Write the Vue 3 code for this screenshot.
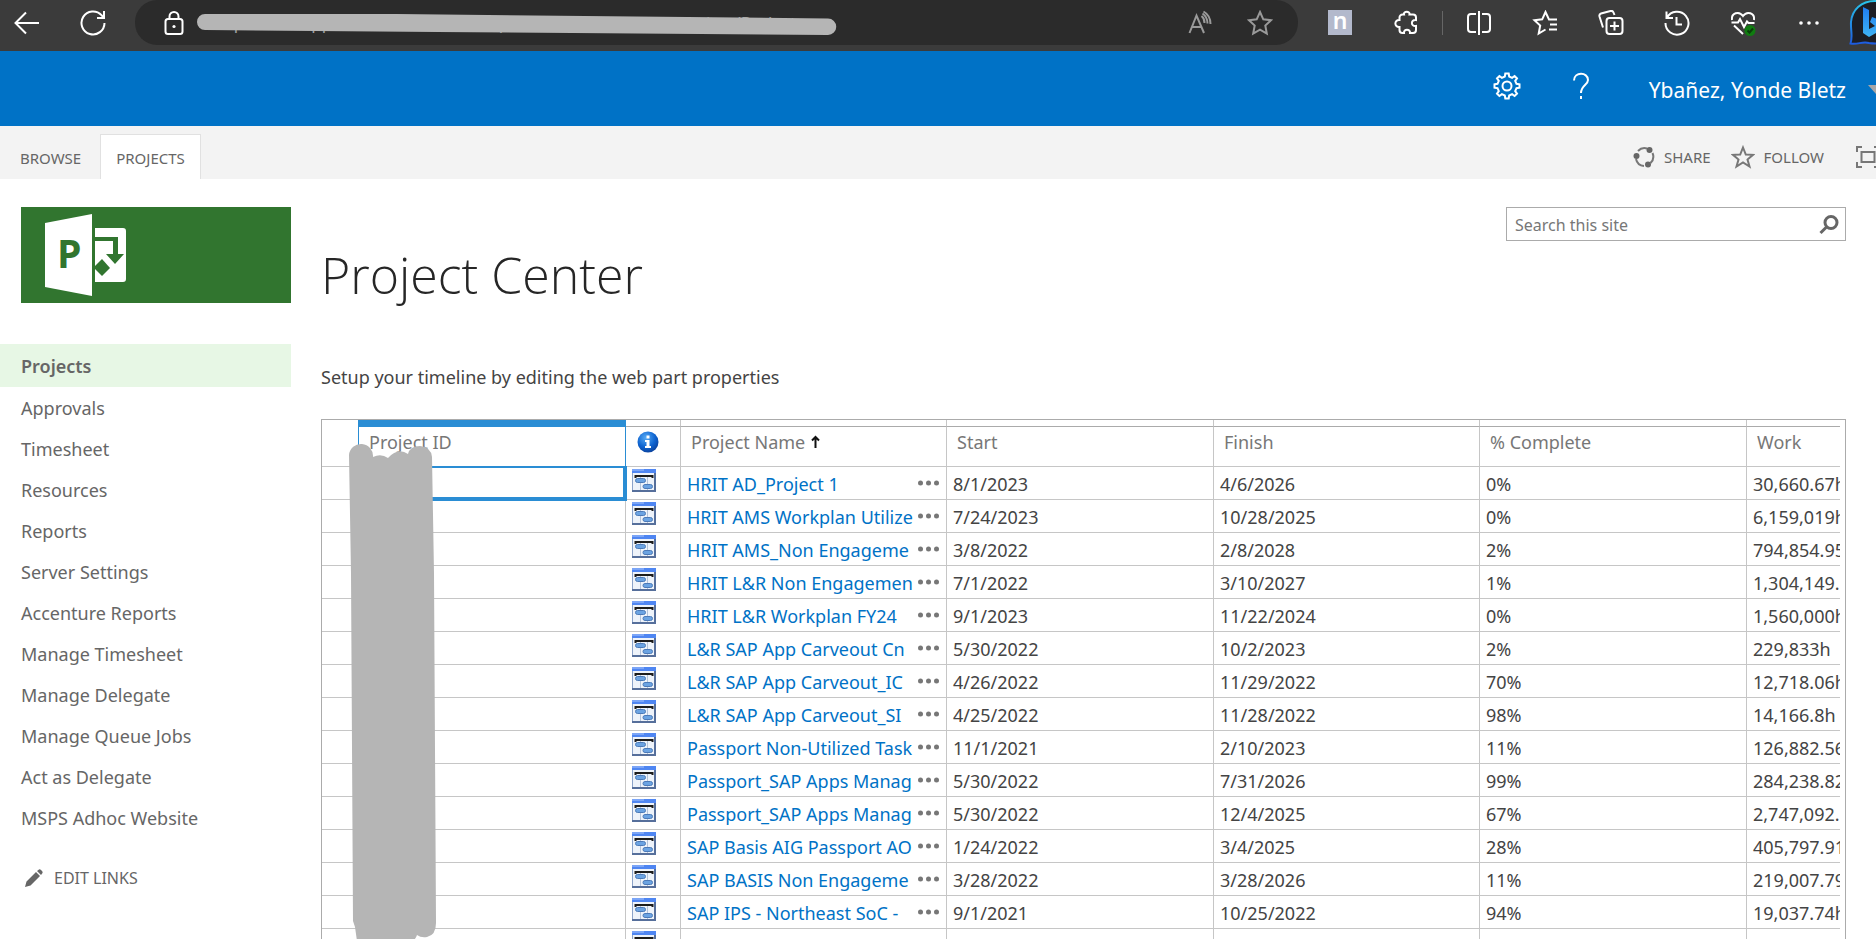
<script setup>
import { ref } from 'vue'

const address = ref('https://dev.apps.intranet.local/sites/portfolio/pages/views/Project/Project')
const query = ref('')

const navItems = [
  'Projects', 'Approvals', 'Timesheet', 'Resources', 'Reports', 'Server Settings',
  'Accenture Reports', 'Manage Timesheet', 'Manage Delegate', 'Manage Queue Jobs',
  'Act as Delegate', 'MSPS Adhoc Website',
]

const rows = [
  ['HRIT AD_Project 1', '8/1/2023', '4/6/2026', '0%', '30,660.67h'],
  ['HRIT AMS Workplan Utilize', '7/24/2023', '10/28/2025', '0%', '6,159,019h'],
  ['HRIT AMS_Non Engageme', '3/8/2022', '2/8/2028', '2%', '794,854.95'],
  ['HRIT L&R Non Engagemen', '7/1/2022', '3/10/2027', '1%', '1,304,149.'],
  ['HRIT L&R Workplan FY24', '9/1/2023', '11/22/2024', '0%', '1,560,000h'],
  ['L&R SAP App Carveout Cn', '5/30/2022', '10/2/2023', '2%', '229,833h'],
  ['L&R SAP App Carveout_IC', '4/26/2022', '11/29/2022', '70%', '12,718.06h'],
  ['L&R SAP App Carveout_SI', '4/25/2022', '11/28/2022', '98%', '14,166.8h'],
  ['Passport Non-Utilized Task', '11/1/2021', '2/10/2023', '11%', '126,882.56'],
  ['Passport_SAP Apps Manag', '5/30/2022', '7/31/2026', '99%', '284,238.82'],
  ['Passport_SAP Apps Manag', '5/30/2022', '12/4/2025', '67%', '2,747,092.'],
  ['SAP Basis AIG Passport AO', '1/24/2022', '3/4/2025', '28%', '405,797.91'],
  ['SAP BASIS Non Engageme', '3/28/2022', '3/28/2026', '11%', '219,007.79'],
  ['SAP IPS - Northeast SoC -', '9/1/2021', '10/25/2022', '94%', '19,037.74h'],
  ['SAP IPS Workplan', '9/1/2021', '10/25/2022', '0%', '19,037.74h'],
]
</script>

<template>
  <div class="page">
    <header class="browser">
      <button class="tool back" aria-label="Back">
        <svg width="26" height="26" viewBox="0 0 26 26"><path d="M25 13H2M12 2.500L1.500 13L12 23.500" /></svg>
      </button>
      <button class="tool reload" aria-label="Refresh">
        <svg width="26" height="26" viewBox="0 0 26 26"><path d="M24.500 13A11.500 11.500 0 1 1 21.500 5.200L23.500 7.500M24 1V8H17" /></svg>
      </button>
      <div class="omnibox">
        <svg class="lock" width="24" height="26" viewBox="0 0 24 26"><rect x="3.500" y="9" width="17" height="15" rx="2.500" /><path d="M7.500 9V6.500a4.500 4.500 0 0 1 9 0V9" /><circle class="solid" cx="12" cy="16.500" r="1.600" /></svg>
        <div class="address">
          <input v-model="address" type="text" aria-label="Address" spellcheck="false" />
          <svg class="strike" width="640" height="24" viewBox="0 0 640 24"><path d="M8 1H200L631 5.500a8 8 0 0 1 0 16.500L240 19L8 17a8 8 0 0 1 0-16Z" /></svg>
        </div>
        <button class="inner" aria-label="Read aloud">
          <svg width="26" height="26" viewBox="0 0 26 26"><path d="M2.500 23L9.500 5.500L17 23M5 17H14.500M14.500 6c2 1.500 3 4 3 7M16.500 1.500c4.500 2.500 7 6.500 7 12.500M15.500 3.500c3.500 2.500 5 5.500 5 10" /></svg>
        </button>
        <button class="inner" aria-label="Add to favorites">
          <svg width="26" height="26" viewBox="0 0 26 26"><path d="M13 2L16.300 9.300L24 10.200L18.300 15.500L19.800 23.500L13 19.600L6.200 23.500L7.700 15.500L2 10.200L9.700 9.300Z" /></svg>
        </button>
      </div>
      <div class="tools">
        <button class="tool" aria-label="Notes extension"><span class="letter">n</span></button>
        <button class="tool" aria-label="Extensions">
          <svg width="26" height="26" viewBox="0 0 26 26"><path d="M11 4.500C10 .8 17.500 .8 16.500 4.500H20a3 3 0 0 1 3 3V10C17.500 9 17.500 17 23 16V20a3 3 0 0 1-3 3H17C17.500 18.500 10.500 18.500 11 23H9.500a3 3 0 0 1-3-3V17C1 17.500 1 9.500 6.500 10V7.500a3 3 0 0 1 3-3Z" /></svg>
        </button>
        <span class="divider"></span>
        <button class="tool" aria-label="Split screen">
          <svg width="26" height="26" viewBox="0 0 26 26"><path d="M13 1V25M10 4H5a3 3 0 0 0-3 3V19a3 3 0 0 0 3 3H10M16 4H21a3 3 0 0 1 3 3V19a3 3 0 0 1-3 3H16" /></svg>
        </button>
        <button class="tool" aria-label="Favorites">
          <svg width="26" height="26" viewBox="0 0 26 26"><path d="M25 9.500H17L13.500 2L10.200 9.300L2.500 10.200L8.200 15.500L6.700 23.500L13.500 19.500M18 14.500H25M17 19.500H25" /></svg>
        </button>
        <button class="tool" aria-label="Collections">
          <svg width="26" height="26" viewBox="0 0 26 26"><path d="M5 17.500L1.500 6.500a2.500 2.500 0 0 1 1.500-3L12.500 1a2.500 2.500 0 0 1 3 1.500L16.500 5" /><rect x="8.500" y="8" width="16" height="16" rx="3" /><path d="M16.500 11.500V20.500M12 16H21" /></svg>
        </button>
        <button class="tool" aria-label="History">
          <svg width="26" height="26" viewBox="0 0 26 26"><path d="M2.500 1.500V8H9M3 7.500A11.500 11.500 0 1 1 1.500 13M12.500 7V14.500H18" /></svg>
        </button>
        <button class="tool" aria-label="Browser essentials">
          <svg width="26" height="26" viewBox="0 0 26 26"><path d="M2 10C1 3 9 .5 13 6C17 .5 25 3 24 10M1.500 12.500H8L10 9L14 17L17 11.500L18.500 13H24.500M4 15.500L13 24" /><circle class="good" cx="20" cy="20.500" r="5.500" /><path class="tick" d="M17.500 20.500L19.500 22.500L23 18.500" /></svg>
        </button>
        <button class="tool" aria-label="Settings and more">
          <svg width="26" height="26" viewBox="0 0 26 26"><g class="solid"><circle cx="5" cy="13" r="1.800" /><circle cx="13" cy="13" r="1.800" /><circle cx="21" cy="13" r="1.800" /></g></svg>
        </button>
        <button class="bing" aria-label="Bing">
          <svg width="52" height="48" viewBox="0 0 52 48">
            <defs>
              <linearGradient id="rim" x1="0" y1="0" x2="0" y2="1"><stop offset="0" stop-color="#29c3e8" /><stop offset="1" stop-color="#1d5be0" /></linearGradient>
              <linearGradient id="bee" x1="0" y1="0" x2="0" y2="1"><stop offset="0" stop-color="#1f7cf0" /><stop offset="1" stop-color="#3fb4f5" /></linearGradient>
            </defs>
            <path d="M26 1C12 1 3 10 2 22C1.500 31 4 36 1.500 43.500C9 45 13 41 20 43C40 46 50 34 50 22C50 10 40 1 26 1Z" fill="#1c1d24" stroke="url(#rim)" stroke-width="2" />
            <path class="bee" d="M14 7L20 10V29L26 26L21 22L23 17L36 22V28L20 37L14 33Z" fill="url(#bee)" />
          </svg>
        </button>
      </div>
    </header>

    <div class="suite">
      <button class="gear" aria-label="Settings">
        <svg width="28" height="28" viewBox="0 0 28 28"><path d="M11.800 4.500L12.300 1.500H15.700L16.200 4.500L19.100 5.800L21.600 4L24 6.400L22.200 8.900L23.500 11.800L26.500 12.300V15.700L23.500 16.200L22.200 19.100L24 21.600L21.600 24L19.100 22.200L16.200 23.500L15.700 26.500H12.300L11.800 23.500L8.900 22.200L6.400 24L4 21.600L5.800 19.100L4.500 16.200L1.500 15.700V12.300L4.500 11.800L5.800 8.900L4 6.400L6.400 4L8.900 5.800Z" /><circle cx="14" cy="14" r="4.500" /></svg>
      </button>
      <button class="help" aria-label="Help">
        <svg width="18" height="28" viewBox="0 0 18 28"><path d="M2 8.500C2 -.3 16 -.3 16 8C16 13 9 13.500 9 21M9 24V27" /></svg>
      </button>
      <button class="user">Ybañez, Yonde Bletz<span class="caret"></span></button>
    </div>

    <div class="ribbon">
      <nav class="tabs">
        <a href="#">BROWSE</a>
        <a href="#" class="on">PROJECTS</a>
      </nav>
      <div class="actions">
        <button class="share">
          <svg width="22" height="22" viewBox="0 0 22 22"><path d="M5 5A9 9 0 0 1 14 2.500M19.500 7A9 9 0 0 1 17.500 17M11 20A9 9 0 0 1 3 13" /><g class="dots"><circle cx="16.500" cy="4" r="3" /><circle cx="3.500" cy="10" r="3" /><circle cx="15" cy="18.500" r="3" /></g></svg>
          SHARE
        </button>
        <button class="follow">
          <svg width="24" height="24" viewBox="0 0 24 24"><path d="M12 2.500L14.800 9.500L22 9.800L16.500 14.500L18.500 21.500L12 17.500L5.500 21.500L7.500 14.500L2 9.800L9.200 9.500Z" /></svg>
          FOLLOW
        </button>
        <button class="focus" aria-label="Focus on content">
          <svg width="24" height="22" viewBox="0 0 24 22"><path d="M6 1H1V6M1 16V21H6M18 1H23V6M23 16V21H18" /><rect x="5.500" y="6" width="13" height="10" /></svg>
        </button>
      </div>
    </div>

    <div class="body">
      <aside>
        <a href="#" class="logo" aria-label="Project">
          <svg width="270" height="96" viewBox="0 0 270 96">
            <path d="M24 16L71 7V89L24 80Z" fill="#fff" />
            <path d="M74 21H102a3 3 0 0 1 3 3V72a3 3 0 0 1-3 3H74V34H92V47H85L94 57L103 47H97V30H74Z" fill="#fff" />
            <path d="M73 60L81 52L89 61L81 69L74 62Z" fill="#31752f" />
            <text x="36" y="61">P</text>
          </svg>
        </a>
        <nav class="side">
          <a v-for="(item, i) in navItems" :key="item" href="#" :class="{ current: i === 0 }">{{ item }}</a>
        </nav>
        <button class="edit">
          <svg width="18" height="18" viewBox="0 0 18 18"><path d="M0 18L1.500 12.500L11 3L15 7L5.500 16.500ZM12 2L14 0.500Q15 0 16 1L17 2Q18 3 17.500 4L16 6Z" /></svg>
          EDIT LINKS
        </button>
      </aside>

      <main>
        <div class="heading">
          <h1>Project Center</h1>
          <form class="search" @submit.prevent>
            <input v-model="query" type="text" placeholder="Search this site" aria-label="Search this site" />
            <button aria-label="Search">
              <svg width="20" height="20" viewBox="0 0 20 20"><circle cx="12" cy="7.500" r="6" /><path d="M7.500 12L1.500 18" /></svg>
            </button>
          </form>
        </div>
        <p>Setup your timeline by editing the web part properties</p>

        <div class="grid">
          <table>
            <colgroup>
              <col class="c-sel" /><col class="c-wide" /><col class="c-info" /><col class="c-mid" />
              <col class="c-wide" /><col class="c-mid" /><col class="c-wide" /><col />
            </colgroup>
            <thead>
              <tr class="handle">
                <th rowspan="2" class="corner"></th>
                <th class="bar"></th><th></th><th></th><th></th><th></th><th></th><th></th>
              </tr>
              <tr class="titles">
                <th class="active">Project ID</th>
                <th class="info">
                  <svg width="22" height="22" viewBox="0 0 22 22">
                    <defs><radialGradient id="ball" cx="0.400" cy="0.300" r="0.750"><stop offset="0" stop-color="#55aaf5" /><stop offset="0.600" stop-color="#0d62cf" /><stop offset="1" stop-color="#0b3f98" /></radialGradient></defs>
                    <circle cx="11" cy="11" r="10.500" fill="url(#ball)" />
                    <path d="M9.500 4.500h3v3h-3ZM8 9h4.500v6H14v2H8v-2h1.500v-4H8Z" fill="#fff" />
                  </svg>
                </th>
                <th>Project Name<svg class="sort" width="9" height="14" viewBox="0 0 9 14"><path d="M4.500 13V2M1 5.500L4.500 2L8 5.500" /></svg></th>
                <th>Start</th>
                <th>Finish</th>
                <th>% Complete</th>
                <th>Work</th>
              </tr>
            </thead>
            <tbody>
              <tr v-for="(row, i) in rows" :key="i">
                <td></td>
                <td :class="{ chosen: i === 0 }"></td>
                <td class="mark">
                  <svg width="24" height="23" viewBox="0 0 24 23">
                    <rect width="24" height="23" fill="#8ba3c9" />
                    <rect x="1" y="4" width="21" height="17" fill="#eef3fa" />
                    <rect width="24" height="4" fill="#4f86f2" /><rect width="12" height="2" fill="#7ba5f7" />
                    <path d="M8.500 8V21M15.500 8V21" stroke="#b4c3da" />
                    <path d="M3.500 9V7H20.500V9" fill="none" stroke="#1c1c1c" stroke-width="2" />
                    <rect x="3.500" y="9.500" width="10" height="4" rx="2" fill="#6ba3e2" stroke="#4c7ab8" />
                    <rect x="11" y="15.500" width="9.500" height="4" rx="2" fill="#6ba3e2" stroke="#4c7ab8" />
                    <path d="M0 22H24M23 4V23" stroke="#566f9b" stroke-width="2" />
                  </svg>
                </td>
                <td class="name">
                  <div>
                    <a href="#">{{ row[0] }}</a>
                    <button aria-label="Open menu"><svg width="21" height="6" viewBox="0 0 21 6"><circle cx="2.500" cy="3" r="2.500" /><circle cx="10.500" cy="3" r="2.500" /><circle cx="18.500" cy="3" r="2.500" /></svg></button>
                  </div>
                </td>
                <td v-for="value in row.slice(1)" :key="value">{{ value }}</td>
              </tr>
            </tbody>
          </table>
          <svg class="cover" width="90" height="498" viewBox="0 0 90 498"><path d="M0 12A12 12 0 0 1 24 14Q32 10 39 15Q49 4 59 11Q61 3 71 3Q82 4 83 14L85 130L87 480Q87 492 78 494Q72 495 68 492Q66 498 62 498H8L6 484L4 478L2 130Z" /></svg>
        </div>
      </main>
    </div>
  </div>
</template>

<style>
body {
  margin: 0;
  overflow: hidden;
}
</style>

<style scoped>
.page {
  height: 100vh;
  overflow: hidden;
  display: flex;
  flex-direction: column;
  background: #fff;
  font: 18px/24px "Noto Sans", "Open Sans", sans-serif;
  color: #444;
}
button {
  border: 0;
  padding: 0;
  background: none;
  font: inherit;
  color: inherit;
  cursor: pointer;
}
a {
  color: inherit;
  text-decoration: none;
}
svg {
  display: block;
  flex: none;
}
.browser {
  flex: none;
  display: flex;
  height: 51px;
  background: #3b3b3b;
  overflow: hidden;
}
.browser svg {
  fill: none;
  stroke: #fff;
  stroke-width: 2;
}
.browser .solid {
  fill: #fff;
  stroke: none;
}
.browser .good {
  fill: #107c10;
  stroke: none;
}
.browser .tick {
  stroke: #0a3d0a;
}
.browser .bee {
  stroke: none;
}
.tool {
  width: 66px;
  height: 45px;
  display: flex;
  align-items: center;
  justify-content: center;
}
.back {
  width: 54px;
  margin-right: 6px;
}
.reload {
  margin-right: 9px;
}
.omnibox {
  flex: 1;
  min-width: 0;
  height: 45px;
  box-sizing: border-box;
  padding: 0 8px 0 27px;
  border-radius: 22px;
  background: #2b2b2b;
  display: flex;
  align-items: center;
}
.address {
  position: relative;
  flex: 1;
  min-width: 0;
  display: flex;
  overflow: hidden;
  padding-left: 11px;
}
.address input {
  flex: 1;
  min-width: 0;
  height: 44px;
  padding: 0 14px;
  border: 0;
  background: none;
  font: inherit;
  font-size: 17px;
  color: #a0a0a0;
}
.address .strike {
  position: absolute;
  top: 12px;
  left: 11px;
  fill: #b5b5b5;
  stroke: none;
}
.inner {
  width: 60px;
  height: 45px;
  display: flex;
  align-items: center;
  justify-content: center;
}
.omnibox .inner svg {
  stroke: #9a9a9a;
}
.tools {
  display: flex;
  padding-left: 9px;
}
.letter {
  width: 24px;
  height: 25px;
  background: #b3b9cc;
  color: #fff;
  font-size: 23px;
  font-weight: 600;
  line-height: 20px;
}
.divider {
  width: 1px;
  height: 24px;
  margin: 11px 3px;
  background: #666;
}
.bing {
  width: 34px;
  height: 48px;
  padding-left: 7px;
  overflow: hidden;
}
.suite {
  flex: none;
  height: 75px;
  background: #0072c6;
  color: #fff;
  display: flex;
  align-items: center;
  justify-content: flex-end;
}
.suite svg {
  fill: none;
  stroke: #fff;
  stroke-width: 2;
}
.gear,
.help {
  padding-bottom: 5px;
}
.gear {
  margin-right: 51px;
}
.help {
  margin-right: 59px;
}
.user {
  display: flex;
  align-items: center;
  gap: 22px;
  padding-top: 2px;
  font-size: 21px;
}
.caret {
  width: 8px;
  height: 9px;
  background: #a6a6a6;
  clip-path: polygon(0 0, 100% 0, 100% 100%);
}
.ribbon {
  flex: none;
  height: 53px;
  background: #f3f3f3;
  display: flex;
  justify-content: space-between;
  font-size: 15px;
  color: #666;
}
.tabs {
  display: flex;
  align-items: flex-end;
}
.tabs a {
  box-sizing: border-box;
  height: 45px;
  padding: 11px 19px 0 20px;
  border-top: 1px solid transparent;
}
.tabs .on {
  padding: 11px 15px 0;
  border: 1px solid #e1e1e1;
  border-bottom: 0;
  background: #fff;
}
.actions {
  display: flex;
  align-items: center;
  padding-top: 8px;
}
.actions button {
  display: flex;
  align-items: center;
  gap: 9px;
}
.actions svg {
  fill: none;
  stroke: #777;
  stroke-width: 2;
}
.actions .dots {
  fill: #666;
  stroke: none;
}
.share {
  margin-right: 20px;
}
.follow {
  margin-right: 32px;
}
.focus {
  width: 20px;
  overflow: hidden;
}
.body {
  flex: 1;
  min-height: 0;
  display: grid;
  grid-template-columns: 291px 1fr;
}
aside {
  padding-top: 28px;
  color: #666;
}
.logo {
  display: block;
  margin: 0 0 41px 21px;
  background: #31752f;
}
.logo text {
  font: 700 39px "Open Sans", sans-serif;
  fill: #31752f;
}
.side a {
  display: block;
  padding: 1px 0 0 21px;
  line-height: 40px;
}
.side .current {
  background: #e7f7e5;
  font-weight: 600;
  line-height: 42px;
}
.edit {
  display: flex;
  align-items: center;
  gap: 11px;
  margin: 20px 0 0 25px;
  height: 40px;
  font-size: 16px;
}
.edit svg {
  fill: #666;
}
main {
  min-width: 0;
  padding: 28px 30px 0;
}
.heading {
  display: flex;
  justify-content: space-between;
  align-items: flex-start;
}
h1 {
  margin: 32px 0 0;
  font-family: "Open Sans", "Noto Sans", sans-serif;
  font-size: 50px;
  font-weight: 300;
  line-height: 72px;
  color: #262626;
}
.search {
  box-sizing: border-box;
  width: 340px;
  height: 34px;
  border: 1px solid #ababab;
  display: flex;
  align-items: center;
  padding: 2px 6px 0 8px;
}
.search input {
  flex: 1;
  min-width: 0;
  padding: 0;
  border: 0;
  outline: 0;
  font: inherit;
  font-size: 16px;
}
.search input::placeholder {
  color: #777;
}
.search svg {
  fill: none;
  stroke: #666;
  stroke-width: 3;
}
p {
  margin: 54px 0 30px;
}
.grid {
  position: relative;
  border: 1px solid #ababab;
  padding-right: 5px;
}
table {
  width: 100%;
  table-layout: fixed;
  border-collapse: separate;
  border-spacing: 0;
}
.c-sel { width: 37px; }
.c-info { width: 55px; }
.c-mid { width: 266px; }
.c-wide { width: 267px; }
th,
td {
  box-sizing: border-box;
  height: 33px;
  padding: 2px 0 0 6px;
  border-right: 1px solid #c6c6c6;
  border-bottom: 1px solid #c6c6c6;
  text-align: left;
  font-weight: 400;
  white-space: nowrap;
  overflow: hidden;
}
th:last-child,
td:last-child {
  border-right: 0;
}
.handle th {
  height: 7px;
  padding: 0;
  border-bottom-color: #ababab;
}
.handle .corner {
  border-right-color: #2a8dd4;
  border-bottom-color: #c6c6c6;
}
.handle .bar {
  background: #2a8dd4;
  border-color: #2a8dd4;
}
.titles th {
  height: 40px;
  padding: 0 0 10px 10px;
  color: #777;
}
.titles .active {
  border-right-color: #2a8dd4;
}
.titles .info {
  padding: 0 0 9px 11px;
}
.sort {
  display: inline-block;
  margin-left: 6px;
  fill: none;
  stroke: #111;
  stroke-width: 2;
}
td.chosen {
  position: relative;
  overflow: visible;
}
.chosen::after {
  content: "";
  position: absolute;
  inset: -1px -2px -2px -1px;
  border: solid #2a8dd4;
  border-width: 2px 4px 4px 2px;
}
td.mark {
  padding: 0 0 5px 6px;
}
.name div {
  display: flex;
  align-items: center;
  gap: 5px;
  padding-right: 7px;
}
.name a {
  flex: 1;
  min-width: 0;
  overflow: hidden;
  color: #0072c6;
}
.name button {
  padding-bottom: 2px;
}
.name svg {
  fill: #777;
}
.cover {
  position: absolute;
  top: 23px;
  left: 27px;
  fill: #b5b5b5;
}
</style>
